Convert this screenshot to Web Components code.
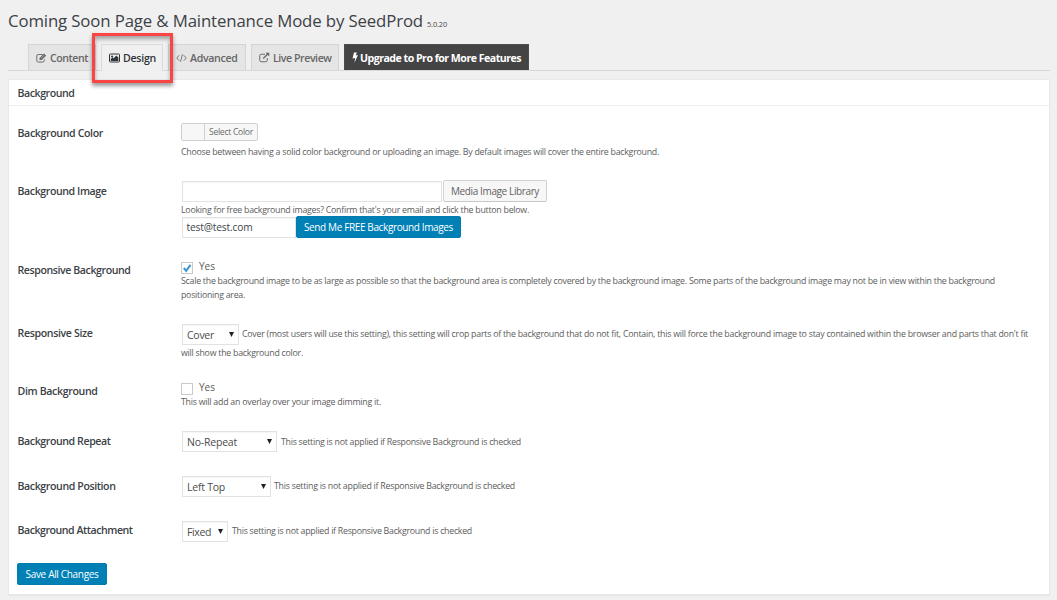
<!DOCTYPE html>
<html lang="en">
<head>
<meta charset="utf-8">
<title>Coming Soon Page &amp; Maintenance Mode</title>
<style>
html,body{margin:0;height:100%;overflow:hidden}
body{background:#f0f0f0;font-family:"Open Sans","Noto Sans",sans-serif;color:#444}
</style>
</head>
<body>
<settings-page></settings-page>
<script>
const define = (name, html, setup) => {
  const tpl = document.createElement('template');
  tpl.innerHTML = html;
  customElements.define(name, class extends HTMLElement {
    connectedCallback() {
      if (this.shadowRoot) return;
      this.attachShadow({mode: 'open'}).append(tpl.content.cloneNode(true));
      if (setup) setup(this, this.shadowRoot);
    }
  });
};

/* One line of text, tracked so that it occupies the width given in "w". */
define('fit-text', `<style>
:host{display:inline-block;white-space:nowrap;flex:none}
span{display:inline-block}
</style><span><slot></slot></span>`, (el, root) => {
  const w = +el.getAttribute('w');
  const natural = root.querySelector('span').getBoundingClientRect().width;
  el.style.letterSpacing = ((w - natural) / el.textContent.length).toFixed(4) + 'px';
  el.style.width = w + 'px';
});

const icons = {
  edit: `<svg width="11" height="10" viewBox="0 0 22 20" fill="none" stroke="currentColor"><path d="M13.500 3H4.500A3 3 0 0 0 1.500 6V15A3 3 0 0 0 4.500 18H13.500A3 3 0 0 0 16.500 15V12.500" stroke-width="1.900"/><path d="M7 13.500V10L16 1.200L20.300 5.300L11.200 14H7Z" fill="currentColor" stroke="none"/><path d="M9.800 10.800L16 4.700" stroke="#e5e5e5" stroke-width="1"/></svg>`,
  image: `<svg width="11" height="10" viewBox="0 0 22 20"><rect x="1" y="2" width="20" height="16" rx="1.500" fill="none" stroke="currentColor" stroke-width="2"/><circle cx="6.200" cy="7" r="2.200" fill="currentColor"/><path d="M3.500 16V12L7 8.500L9.500 10.500L14.500 5L18.800 9V16Z" fill="currentColor"/></svg>`,
  code: `<svg width="11" height="10" viewBox="0 0 22 20" fill="none" stroke="currentColor" stroke-width="1.700"><path d="M6.500 4.500L1.500 10L6.500 15.500M15.500 4.500L20.500 10L15.500 15.500M13 2.500L9 17.500"/></svg>`,
  external: `<svg width="11" height="11" viewBox="0 0 22 22" fill="none" stroke="currentColor"><path d="M12 4.500H4.500A3 3 0 0 0 1.500 7.500V16.500A3 3 0 0 0 4.500 19.500H13.500A3 3 0 0 0 16.500 16.500V12" stroke-width="1.900"/><path d="M8.500 13L17.500 4" stroke-width="2.600"/><path d="M13 1.500H20.500V9Z" fill="currentColor" stroke="none"/></svg>`,
  bolt: `<svg width="6" height="11" viewBox="0 0 12 22"><path d="M4 1H9.500L7.500 7L11.800 6L5 21.500L6.300 12L1 13.200Z" fill="currentColor"/></svg>`
};

define('nav-tab', `<style>
:host{display:flex;align-items:center;box-sizing:border-box;height:26px;border:1px solid #d4d4d4;border-bottom:0;background:#e5e5e5;color:#666;padding:0 0 0 7px;font:600 10.600px "Open Sans",sans-serif;gap:3px}
:host([active]){background:#f0f0f0;color:#30353a;height:27px;border-color:#dadada;padding-bottom:1px}
:host([pro]){background:#444;border-color:#4c4c4c;color:#fff;font-weight:700;gap:2px}
svg{display:block;flex:none}
i{display:flex}
</style><i></i><slot></slot>`, (el, root) => {
  root.querySelector('i').innerHTML = icons[el.getAttribute('icon')];
  el.style.width = el.getAttribute('w') + 'px';
});

define('push-button', `<style>
:host{display:inline-flex;align-items:center;justify-content:center;box-sizing:border-box;flex:none;height:22px;border:1px solid #d2d2d2;border-bottom-color:#c8c8c8;border-radius:2px;background:#f7f7f7;color:#626262;font:400 10px "Open Sans",sans-serif}
:host([primary]){background:#0080b5;border-color:#007cb0;color:#fff}
</style><slot></slot>`, el => { el.style.width = el.getAttribute('w') + 'px'; });

define('text-box', `<style>
:host{display:flex;align-items:center;box-sizing:border-box;flex:none;height:21px;border:1px solid #e2e2e2;background:#fff;box-shadow:inset 0 1px 1px #0000000c;padding-left:3.500px;color:#40454a;font-size:10.200px}
</style><slot></slot>`, el => { el.style.width = el.getAttribute('w') + 'px'; });

define('select-box', `<style>
:host{display:flex;align-items:center;justify-content:space-between;box-sizing:border-box;flex:none;height:21px;border:1px solid #e2e2e2;background:#fff;box-shadow:inset 0 1px 1px #0000000a;padding:1px 4px 0 4px;color:#4c4c4c;font-size:10.500px}
svg{display:block;margin-top:-2px}
</style><slot></slot><svg width="5" height="5" viewBox="0 0 5 5"><path d="M0 0H5L2.500 5Z" fill="#222"/></svg>`,
  el => { el.style.width = el.getAttribute('w') + 'px'; });

define('check-box', `<style>
:host{display:flex;height:14px;font-size:10px;color:#5a5a5a;gap:6px}
i{box-sizing:border-box;width:12px;height:12px;border:1px solid #cacaca;background:#fff;margin-top:1px;display:block}
svg{display:none}
:host([checked]) svg{display:block}
div{line-height:11px}
</style><i><svg width="10" height="10" viewBox="0 0 10 10"><path d="M1.800 5L4.200 7.800L8.500 1.800" fill="none" stroke="#3a96d0" stroke-width="2"/></svg></i><div><slot></slot></div>`);

define('color-picker', `<style>
:host{display:flex;box-sizing:border-box;width:77px;height:18px;border:1px solid #d0d0d0;border-radius:2px;background:#f7f7f7;font-size:8.700px;color:#6c6c6c}
i{width:22px;border-right:1px solid #d0d0d0}
div{flex:1;display:flex;align-items:center;justify-content:center;padding-bottom:1px}
</style><i></i><div><slot></slot></div>`);

define('setting-row', `<style>
:host{display:grid;grid-template-columns:163.500px 1fr;padding-left:8.500px;box-sizing:border-box}
.label{font-weight:600;font-size:10.600px;line-height:34px;color:#3c4146}
.body{font-size:8.800px;color:#5c5c5c;display:flex;flex-direction:column;align-items:flex-start}
</style><div class="label"><slot name="label"></slot></div><div class="body"><slot></slot></div>`, (el, root) => {
  el.style.height = el.getAttribute('h') + 'px';
  root.querySelector('.body').style.paddingTop = el.getAttribute('top') + 'px';
});

define('page-title', `<style>
:host{display:flex;align-items:baseline;height:44px;padding-left:8px;box-sizing:border-box;gap:4px;line-height:41px}
.t{font-size:16.800px;color:#3c4146}.v{font-size:7.400px;color:#444}
</style><fit-text class="t" w="415">Coming Soon Page &amp; Maintenance Mode by SeedProd</fit-text><fit-text class="v" w="20">5.0.20</fit-text>`);

define('tab-bar', `<style>
:host{display:flex;height:26px;padding-left:20px;margin:0 7px 0 8px;border-bottom:1px solid #d8d8d8;position:relative;align-items:flex-start}
.mark{position:absolute;left:84px;top:-11px;width:81px;height:50px;box-sizing:border-box;border:3px solid #fb4545;box-shadow:0 3px 4px #0006,inset 0 3px 4px #0005}
.design{margin-left:5px}.advanced{margin-left:5px}.live{margin-left:5px}.pro{margin-left:5px}
</style>
<nav-tab w="68" icon="edit"><fit-text w="38">Content</fit-text></nav-tab>
<nav-tab class="design" w="62" icon="image" active><fit-text w="33">Design</fit-text></nav-tab>
<nav-tab class="advanced" w="78" icon="code"><fit-text w="47.5">Advanced</fit-text></nav-tab>
<nav-tab class="live" w="88" icon="external"><fit-text w="58.5">Live Preview</fit-text></nav-tab>
<nav-tab class="pro" w="185" icon="bolt" pro><fit-text w="161">Upgrade to Pro for More Features</fit-text></nav-tab>
<div class="mark"></div>`);

define('settings-panel', `<style>
:host{display:block;box-sizing:border-box;margin:8px 7px 0 8px;height:516px;background:#fff;border:1px solid #e9e9e9;box-shadow:0 1px 1px #0000000a}
header{height:26px;box-sizing:border-box;border-bottom:1px solid #eee;padding-left:8.500px;font-weight:600;font-size:10.600px;line-height:26px;color:#3c4146}
main{padding-top:10px}
.line{display:flex;align-items:center}
.desc{line-height:14px;height:14px;display:block}
.in{margin-left:1px}
</style>
<header><fit-text w="57">Background</fit-text></header>
<main>
<setting-row h="58" top="7"><fit-text slot="label" w="85.5">Background Color</fit-text>
  <color-picker><fit-text w="44">Select Color</fit-text></color-picker>
  <fit-text class="desc" style="margin-top:4px" w="478">Choose between having a solid color background or uploading an image. By default images will cover the entire background.</fit-text>
</setting-row>
<setting-row h="79" top="6"><fit-text slot="label" w="89">Background Image</fit-text>
  <div class="line in"><text-box w="260"></text-box><push-button style="margin-left:1px" w="104"><fit-text w="88">Media Image Library</fit-text></push-button></div>
  <fit-text class="desc" w="348" style="margin-top:.5px;margin-bottom:-.5px">Looking for free background images? Confirm that's your email and click the button below.</fit-text>
  <div class="line in"><text-box w="114"><fit-text w="66">test@test.com</fit-text></text-box><push-button primary w="165"><fit-text w="149">Send Me FREE Background Images</fit-text></push-button></div>
</setting-row>
<setting-row h="63" top="8"><fit-text slot="label" w="113">Responsive Background</fit-text>
  <check-box checked><fit-text w="16">Yes</fit-text></check-box>
  <fit-text class="desc" style="margin-top:-1px" w="814">Scale the background image to be as large as possible so that the background area is completely covered by the background image. Some parts of the background image may not be in view within the background</fit-text>
  <fit-text class="desc" w="64">positioning area.</fit-text>
</setting-row>
<setting-row h="58" top="8"><fit-text slot="label" w="75">Responsive Size</fit-text>
  <div class="line in"><select-box w="57"><fit-text w="27">Cover</fit-text></select-box><fit-text style="margin:-1px 0 0 3px" w="786">Cover (most users will use this setting), this setting will crop parts of the background that do not fit, Contain, this will force the background image to stay contained within the browser and parts that don't fit</fit-text></div>
  <fit-text class="desc" style="margin-top:1px" w="122">will show the background color.</fit-text>
</setting-row>
<setting-row h="50" top="8"><fit-text slot="label" w="80">Dim Background</fit-text>
  <check-box><fit-text w="16">Yes</fit-text></check-box>
  <fit-text class="desc" style="margin-top:-1px" w="200">This will add an overlay over your image dimming it.</fit-text>
</setting-row>
<setting-row h="45" top="7"><fit-text slot="label" w="93">Background Repeat</fit-text>
  <div class="line in"><select-box w="95"><fit-text w="50">No-Repeat</fit-text></select-box><fit-text w="240" style="margin-left:4px">This setting is not applied if Responsive Background is checked</fit-text></div>
</setting-row>
<setting-row h="44" top="7"><fit-text slot="label" w="98">Background Position</fit-text>
  <div class="line in"><select-box w="89"><fit-text w="38">Left Top</fit-text></select-box><fit-text w="241" style="margin:-1px 0 0 3px">This setting is not applied if Responsive Background is checked</fit-text></div>
</setting-row>
<setting-row h="48" top="8"><fit-text slot="label" w="115">Background Attachment</fit-text>
  <div class="line in"><select-box w="46"><fit-text w="24">Fixed</fit-text></select-box><fit-text w="240" style="margin:-1px 0 0 4px">This setting is not applied if Responsive Background is checked</fit-text></div>
</setting-row>
<push-button style="margin-left:8px" primary w="90"><fit-text w="73">Save All Changes</fit-text></push-button>
</main>`);

define('settings-page', `<style>:host{display:block}</style><page-title></page-title><tab-bar></tab-bar><settings-panel></settings-panel>`);
</script>
</body>
</html>
